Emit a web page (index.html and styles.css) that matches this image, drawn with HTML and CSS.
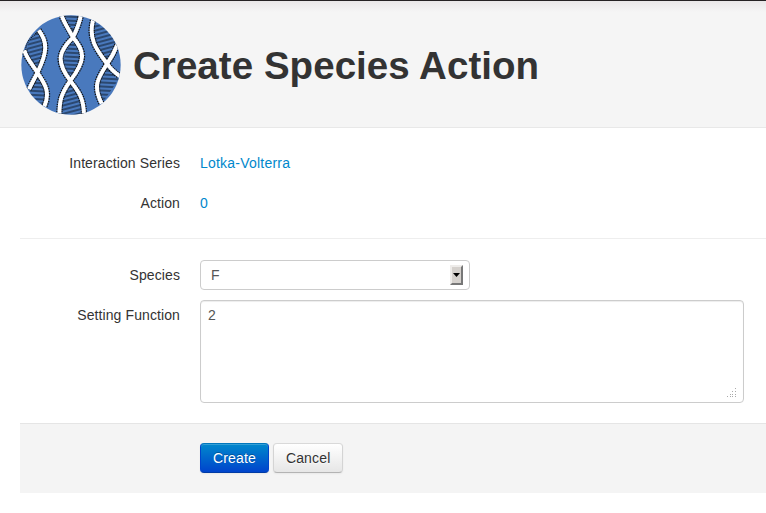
FILE: index.html
```
<!DOCTYPE html>
<html lang="en">
<head>
<meta charset="utf-8">
<title>Create Species Action</title>
<link rel="stylesheet" href="styles.css">
</head>
<body>
<header class="subhead">
  <svg class="logo" viewBox="0 0 318 318" aria-hidden="true">
    <defs>
      <clipPath id="disc"><circle cx="159" cy="159" r="149"/></clipPath>
      <pattern id="up" width="20" height="12" patternUnits="userSpaceOnUse" patternTransform="rotate(-15)"><path class="rung" d="M0 6H20"/></pattern>
      <pattern id="flat" width="20" height="12" patternUnits="userSpaceOnUse" patternTransform="rotate(3)"><path class="rung" d="M0 6H20"/></pattern>
      <path id="strands" d="M62 55C90 90 87 122 60 178C52 196 42 211 33 232M19 115C25 140 47 162 60 185C80 215 98 240 79 283M130 8C138 33 151 50 165 76C201 118 204 144 157 206C128 248 125 265 124 307M189 8C184 35 176 54 165 76C124 116 111 147 157 206C177 235 196 250 198 306M225 25C209 86 242 120 267 155C278 171 289 181 305 192M298 98C286 128 280 137 267 156C241 197 223 220 251 275"/>
    </defs>
    <circle class="disc" cx="159" cy="159" r="149"/>
    <g clip-path="url(#disc)">
      <g class="lens">
        <path fill="url(#up)" d="M60 60C90 95 82 125 60 173C18 130 15 95 60 60Z"/>
        <path fill="url(#flat)" d="M60 190C84 220 93 240 79 281L36 250L36 228Z"/>
        <path fill="url(#flat)" d="M132 8H189L165 76Z"/>
        <path fill="url(#flat)" d="M165 84C190 118 197 151 157 199C125 160 136 120 165 84Z"/>
        <path fill="url(#up)" d="M157 214C185 249 198 259 198 308H124C124 265 130 249 157 214Z"/>
        <path fill="url(#up)" d="M226 32C275 48 296 75 293 108L267 151C232 108 219 85 226 32Z"/>
        <path fill="url(#flat)" d="M267 164L303 200L255 270C226 220 245 199 267 164Z"/>
      </g>
      <path class="rim" d="M60 60C28 84 21 98 24 123"/>
      <use class="edge" href="#strands"/>
      <use class="strand" href="#strands"/>
    </g>
  </svg>
  <h1>Create Species Action</h1>
</header>
<main>
  <form>
    <div class="row"><span class="label">Interaction Series</span><a href="#">Lotka-Volterra</a></div>
    <div class="row"><span class="label">Action</span><a href="#">0</a></div>
    <hr>
    <div class="row">
      <span class="label">Species</span>
      <div class="select"><span>F</span><span class="arrow"><svg width="7" height="4" viewBox="0 0 7 4"><path d="M0 0H7L3.5 4Z"/></svg></span></div>
    </div>
    <div class="row">
      <span class="label">Setting Function</span>
      <div class="area"><span>2</span>
        <svg class="grip" width="10" height="10" viewBox="0 0 10 10"><path d="M8 .5h2M5 3.5h1M8 3.5h2M3 6.5h1M5 6.5h2M8 6.5h2M0 8.5h1M3 8.5h1M5 8.5h2M8 8.5h2"/></svg>
      </div>
    </div>
    <div class="actions">
      <button type="button" class="btn primary">Create</button>
      <button type="button" class="btn">Cancel</button>
    </div>
  </form>
</main>
</body>
</html>
```
FILE: styles.css
```
* { box-sizing: border-box; }
body {
  margin: 0;
  background: #fff;
  color: #333;
  font: 14px/20px "Liberation Sans", Arial, sans-serif;
  letter-spacing: .1px;
  overflow: hidden;
}
.subhead {
  display: flex;
  align-items: center;
  height: 128px;
  padding: 2px 18px 0;
  border-top: 1px solid #252223;
  border-bottom: 1px solid #e8e8e8;
  background: linear-gradient(#e9e7e8, #f5f5f5 11px);
}
.logo { width: 106px; height: 106px; margin-right: 9px; }
.disc { fill: #4a79bd; }
.lens { opacity: .9; }
.rung { stroke: #0e1826; stroke-width: 3.4; }
.rim { fill: none; stroke: #111; stroke-width: 4; stroke-dasharray: 3 3; }
.edge { fill: none; stroke: #111; stroke-width: 19; stroke-dasharray: 4 3; }
.strand { fill: none; stroke: #fff; stroke-width: 12; }
h1 { margin: 2px 0 0; font-size: 38.5px; line-height: 40px; letter-spacing: .05px; }
form { margin-left: 20px; padding-top: 20px; }
.row { display: flex; margin-bottom: 10px; min-height: 30px; }
.label { width: 160px; margin-right: 20px; padding-top: 5px; text-align: right; }
a { padding-top: 5px; color: #0088cc; text-decoration: none; letter-spacing: .22px; }
hr { height: 1px; margin: 20px 0 21px; border: 0; background: #eee; }
.select, .area {
  border: 1px solid #ccc;
  border-radius: 4px;
  background: #fff;
  color: #555;
}
.select {
  display: flex;
  align-items: center;
  justify-content: space-between;
  width: 270px;
  height: 30px;
  padding: 0 6px 0 10px;
}
.arrow {
  display: flex;
  align-items: center;
  justify-content: center;
  width: 13px;
  height: 20px;
  border: 2px solid;
  border-color: #eeecea #777 #777 #eeecea;
  background: #d5d1cd;
}
.arrow path { fill: #000; }
.area {
  position: relative;
  width: 544px;
  height: 103px;
  padding: 4px 7px;
  box-shadow: inset 0 1px 1px rgba(0, 0, 0, .075);
}
.grip { position: absolute; right: 6px; bottom: 4px; stroke: #aaa; stroke-dasharray: 1 1; }
.actions {
  display: flex;
  gap: 4px;
  height: 70px;
  margin-top: 20px;
  padding: 19px 0 0 180px;
  border-top: 1px solid #e5e5e5;
  background: #f4f4f4;
}
.btn {
  height: 30px;
  padding: 0 12px;
  border: 1px solid;
  border-color: #d9d9d9 #d4d4d4 #b3b3b3;
  border-radius: 4px;
  background: linear-gradient(#fff, #e6e6e6);
  color: #333;
  font: inherit;
  letter-spacing: .15px;
  text-shadow: 0 1px 1px rgba(255, 255, 255, .75);
  box-shadow: inset 0 1px 0 rgba(255, 255, 255, .2), 0 1px 2px rgba(0, 0, 0, .05);
}
.primary {
  border-color: #0077bd #0044cc #003ba5;
  background: linear-gradient(#0088cc, #0044cc);
  color: #fff;
  text-shadow: 0 -1px 0 rgba(0, 0, 0, .25);
}
```
